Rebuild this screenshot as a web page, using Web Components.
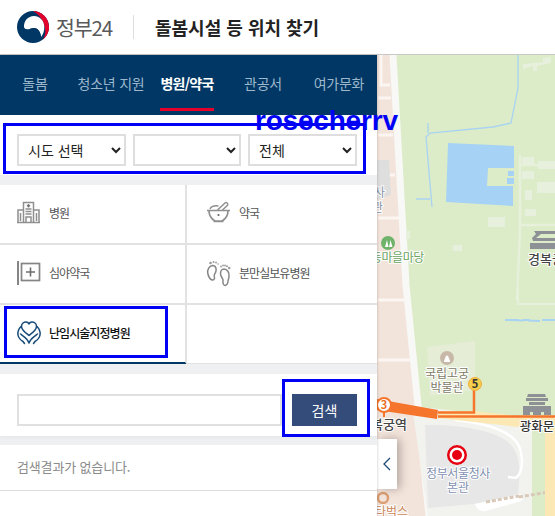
<!DOCTYPE html>
<html lang="ko"><head><meta charset="utf-8"><title>돌봄시설 등 위치 찾기</title>
<style>
html,body{margin:0;height:516px;overflow:hidden;background:#fff}
body{font-family:"Noto Sans CJK KR","Noto Sans",sans-serif;width:555px;position:relative}
</style></head><body>
<care-page>
  <gov-header slot="header" title-text="돌봄시설 등 위치 찾기"></gov-header>
  <care-panel slot="panel">
    <nav-bar>
      <nav-tab>돌봄</nav-tab><nav-tab>청소년 지원</nav-tab><nav-tab active>병원/약국</nav-tab><nav-tab>관공서</nav-tab><nav-tab>여가문화</nav-tab>
    </nav-bar>
    <filter-bar></filter-bar>
    <facility-grid>
      <facility-cell icon="hospital">병원</facility-cell>
      <facility-cell icon="mortar">약국</facility-cell>
      <facility-cell icon="night">심야약국</facility-cell>
      <facility-cell icon="feet">분만실보유병원</facility-cell>
      <facility-cell icon="heart" active>난임시술지정병원</facility-cell>
      <facility-cell></facility-cell>
    </facility-grid>
    <search-box></search-box>
    <result-list>검색결과가 없습니다.</result-list>
  </care-panel>
  <map-view slot="map"></map-view>
</care-page>
<mark-box style="left:3px;top:123px;width:357px;height:45px"></mark-box>
<mark-box style="left:4px;top:306px;width:158px;height:46px"></mark-box>
<mark-box style="left:282px;top:379px;width:82px;height:52px"></mark-box>
<mark-label>rosecherrv</mark-label>
<script>
function def(name, html, init){
  customElements.define(name, class extends HTMLElement{
    constructor(){super();this.attachShadow({mode:'open'}).innerHTML=html;}
    connectedCallback(){if(init)init(this);}
  });
}
def('care-page',`<style>:host{display:flex;flex-direction:column;width:555px;height:516px}
.m{display:flex;height:461px;flex:none;position:relative}</style>
<slot name="header"></slot><div class="m"><slot name="panel"></slot><slot name="map"></slot></div>`);

def('gov-header',`<style>:host{display:flex;align-items:center;height:54px;border-bottom:1px solid #c9c9c9;background:#fff;flex:none;box-sizing:content-box;padding-left:17px}
svg{flex:none;display:block}
.b{font:400 20.5px/1 "Noto Sans CJK KR",sans-serif;color:#58595b;letter-spacing:-1.1px;margin-left:7px;width:61px;white-space:nowrap}
.d{width:1px;height:24px;background:#ddd;margin:0 21px 0 16px}
.t{font:700 18px/1 "Noto Sans CJK KR",sans-serif;color:#222;letter-spacing:0;white-space:nowrap}</style>
<svg width="32" height="32" viewBox="0 0 32 32">
<circle cx="16" cy="16" r="16" fill="#003764"/>
<path d="M16 0c8.800 0 16 7.200 16 16 0 5-2.300 9.500-6 12.500 1.800-3 2.500-6 2.300-9C27.800 11 22.500 3.500 16 0z" fill="#e4002b"/>
<path d="M7 16.500C6.500 10 11 5 17 5c5.500 0 10 4.500 10.300 10.500.2 4-1 7.500-3.300 10.500-.3-5-3-9-7-9-2.500 0-3.500 1-5.500 1.400-2 .4-4-.4-4.500-1.900z" fill="#fff"/>
<path d="M7 16.500c.5 1.500 2.500 2.300 4.500 1.900 2-.4 3-1.400 5.500-1.400 4 0 6.700 4 7 9-2.300 2-5 3.200-8 3C10 29.500 6 23.500 7 16.500z" fill="#003764"/>
</svg><span class="b">정부24</span><span class="d"></span><span class="t"></span>`,
el=>{el.shadowRoot.querySelector('.t').textContent=el.getAttribute('title-text')});

def('care-panel',`<style>:host{display:flex;flex-direction:column;width:377px;flex:none;background:#eef0f2;position:relative;z-index:2;box-shadow:1px 0 2px rgba(0,0,0,.12)}</style><slot></slot>`);

def('nav-bar',`<style>:host{display:block;height:60px;background:#003764;flex:none;overflow:hidden}
div{display:grid;grid-template-columns:repeat(5,76px);margin-left:-3px;height:60px}</style><div><slot></slot></div>`);
def('nav-tab',`<style>:host{display:flex;flex-direction:column;align-items:center;height:60px;font:400 14px/1 "Noto Sans CJK KR",sans-serif;color:#9db8cd;letter-spacing:-.25px;white-space:nowrap}
span{display:block;margin-top:21px;height:35px}
:host([active]) span{color:#fff;font-weight:700;letter-spacing:-.75px;border-bottom:3px solid #e4002b;padding:0 .5px;height:32px}
</style><span><slot></slot></span>`);

def('filter-bar',`<style>:host{display:flex;gap:7px;height:60px;padding:19px 20px 9px 17px;box-sizing:border-box;background:#fff;flex:none;margin-bottom:10px}
select{height:32px;box-sizing:border-box;border:2px solid #dedede;background:#fff;font:400 14px "Noto Sans CJK KR",sans-serif;color:#222;padding:0 6px 0 5px;border-radius:0;outline:0;flex:none}
</style>
<select style="width:109px"><option>시도 선택</option></select>
<select style="width:108px"><option></option></select>
<select style="width:109px"><option>전체</option></select>`);

def('facility-grid',`<style>:host{display:grid;grid-template-columns:187px 190px;grid-auto-rows:60px;background:#fff;flex:none;margin-bottom:10px;height:179px;overflow:hidden}</style><slot></slot>`);
const ICONS={
hospital:`<g fill="none" stroke="#8f8f8f" stroke-width="1.500"><path d="M6.500 21V1.500h10V21M9 21v-5h5v5M1 21V9h5.500M22 21V9h-5.500M0 21.500h23"/><path d="M8.500 8h6M8.500 10.500h6M8.500 13h6M3.500 12v8M19.500 12v8"/><path d="M11.500 3v3.400M9.800 4.700h3.400" stroke="#777"/></g>`,
mortar:`<g fill="none" stroke="#8f8f8f" stroke-width="1.700"><path d="M0 9.500h23M2 9.500c0 5 2.500 8.500 6 10.500h7c3.500-2 6-5.500 6-10.500M6.500 20.500h10"/><path d="M10.500 9l7.500-7c1.300-1.200 3.500.6 2.500 2.200L15.500 9" stroke-width="1.500"/><path d="M3 8c1-2.500 4-3.500 8.500-3" stroke-width="1.500"/><circle cx="11.500" cy="14" r="1.100" fill="#666" stroke="none"/></g>`,
night:`<g fill="none" stroke="#858585"><path d="M1 0v24" stroke-width="2"/><rect x="4.500" y="2.500" width="18" height="17" stroke-width="1.700"/><path d="M13.500 6.500v9M9 11h9" stroke-width="1.600" stroke="#6e6e6e"/></g>`,
feet:`<g fill="none" stroke="#868686" stroke-width="1.500"><path d="M5.500 4.500C2 5 0 9 .8 12.500c.6 2.800 1.800 5 3.400 6 2.300 1.300 4-.6 3.100-2.800-.7-1.700.4-2.700 1.300-4.400 1.200-2.400.6-7.300-3.600-6.800z"/><path d="M17 8c3.300.2 5.500 3.300 5 7.500-.3 2.200-.8 3.200-1.100 5.300-.4 3.200-2.400 4.200-3.900 3.200-1.700-1.100-.8-3.200-1.100-5.300-.3-2-2.400-3.100-2.400-6.200C13.500 10 15 8 17 8z"/></g><g fill="#999"><circle cx="3.500" cy="2" r="1.300"/><circle cx="6.500" cy="1" r="1"/><circle cx="9" cy="1.500" r=".9"/><circle cx="11" cy="3" r=".8"/><circle cx="14" cy="5.500" r=".9"/><circle cx="16" cy="4.500" r=".9"/><circle cx="18" cy="4.500" r=".9"/><circle cx="20" cy="5.200" r="1"/><circle cx="22.200" cy="7" r="1.200"/></g>`,
heart:`<g fill="none" stroke="#164a78" stroke-width="1.500" stroke-linejoin="round" stroke-linecap="round"><path d="M12 14.500C8 11.500 4.500 9 4.500 5.500 4.500 2.500 7 1 9 1c1.500 0 2.500.7 3 2 .5-1.300 1.500-2 3-2 2 0 4.500 1.500 4.500 4.500 0 3.500-3.500 6-7.500 9z"/><path d="M4 5.500C1.500 8 .5 11 1 14c.5 3 2.500 5 5 6.500l1.500 2M20 5.500c2.500 2.500 3.500 5.500 3 8.500-.5 3-2.500 5-5 6.500l-1.500 2"/><path d="M3.500 13c2 1.500 5 3.500 6.500 5.500.8 1 1.500 2 2 3.500.5-1.500 1.200-2.500 2-3.500 1.500-2 4.500-4 6.500-5.500"/></g>`};
def('facility-cell',`<style>:host{display:flex;align-items:center;box-sizing:border-box;height:60px;padding:0 0 2px 17px;border-right:2px solid #e2e2e2;border-bottom:2px solid #e2e2e2;font:400 12px/1 "Noto Sans CJK KR",sans-serif;color:#555;letter-spacing:-.95px;white-space:nowrap}
:host(:nth-child(even)){border-right:0;padding-left:20px}
:host([active]){border-bottom:3px solid #003764;color:#111;font-weight:500;padding-bottom:1px}
svg{width:23px;height:24px;margin-right:9px;flex:none;display:block;overflow:visible}
:host(:not([icon])) svg{display:none}</style><svg viewBox="0 0 23 24"></svg><span><slot></slot></span>`,
el=>{el.shadowRoot.querySelector('svg').innerHTML=ICONS[el.getAttribute('icon')]||''});

def('search-box',`<style>:host{display:flex;gap:10px;height:62px;padding:20px 20px 10px 17px;box-sizing:border-box;background:#fff;flex:none;margin-bottom:9px;box-shadow:0 2px 4px rgba(0,0,0,.04)}
input{width:265px;height:32px;box-sizing:border-box;border:2px solid #e0e0e0;background:#fff;outline:0;margin:0;padding:0 6px;flex:none}
button{width:65px;height:32px;border:0;background:#334c7a;color:#fff;font:400 14px "Noto Sans CJK KR",sans-serif;margin:0;padding:0;flex:none}</style>
<input type="text" aria-label="검색"><button type="button">검색</button>`);

def('result-list',`<style>:host{display:block;background:#fff;flex:1;font:400 13px/1 "Noto Sans CJK KR",sans-serif;color:#8a8a8a;letter-spacing:-.15px}
div{height:46px;box-sizing:border-box;display:flex;align-items:center;padding:0 0 2px 17px;border-bottom:1px solid #ddd}</style><div><slot></slot></div>`);

def('map-view',`<style>:host{display:block;flex:1;position:relative;overflow:hidden;background:#dcecc8}
svg{display:block;width:178px;height:461px}
text{font-family:"Noto Sans CJK KR",sans-serif;paint-order:stroke;stroke:#fff;stroke-width:2px;stroke-linejoin:round}
.tab{position:absolute;left:0;top:384px;width:20px;height:50px;background:#fff;display:flex;align-items:center;justify-content:center;box-shadow:3px 0 10px rgba(0,0,0,.28)}
</style>
<svg viewBox="377 55 178 461">
<polygon points="377,55 393,55 406,285 429,516 377,516" fill="#f3e4db"/>
<path d="M381 55v30h9M378 98h13M378 135h15M378 175h17M378 218h21M378 300h26M378 360h32" stroke="#fbf6f2" stroke-width="3" fill="none"/>
<polygon points="377,160 389,160 391,195 377,200" fill="#dedede"/>
<polyline points="393,55 406,285 429,516" fill="none" stroke="#f8f8f6" stroke-width="7"/>
<path d="M518 55v33l-7 35-18 4-63 6-4 4 6 70M428 123v10M416 199h14" fill="none" stroke="#a9d3f2" stroke-width="1.300"/>
<polygon points="448,143 514,146 514,168 488,168 487,186 513,186 513,206 446,202" fill="#a5d2f5"/>
<rect x="508" y="171" width="6" height="5" fill="#a5d2f5"/><rect x="507" y="178" width="7" height="6" fill="#a5d2f5"/>
<path d="M520 155v75l-3 70M519 225h36M520 165h35" fill="none" stroke="#e6f0da" stroke-width="2.500"/>
<g fill="#e7f0dc"><rect x="522" y="157" width="12" height="7"/><rect x="522" y="171" width="12" height="8"/><rect x="537" y="182" width="18" height="11"/><rect x="525" y="190" width="7" height="10"/><rect x="525" y="209" width="11" height="7"/><rect x="538" y="161" width="17" height="8"/><rect x="488" y="217" width="17" height="10"/><rect x="406" y="231" width="4" height="8"/><rect x="453" y="245" width="9" height="6"/><path d="M523 64l20-2v-4l8-1v6l-14 3v5h-4v-5l-10 3z"/></g>
<g fill="#8d9094"><path d="M534 231h21v3h-14l-5 4h19v3h-22l-1-3 4-4z"/><rect x="530" y="243" width="25" height="6"/></g>
<text x="528" y="264" font-size="13" font-weight="500" fill="#444">경복궁</text>
<circle cx="388" cy="243" r="7" fill="#6fb36b"/><path d="M385 247l2-7 1.500 7zM389 247l1.500-7 2 7z" fill="#fff"/>
<text x="424" y="262" text-anchor="end" font-size="12" fill="#6ba45f" letter-spacing="-.4">동마을마당</text>
<text x="374" y="197" font-size="12" fill="#8b93a7">사</text>
<text x="372" y="212" font-size="12" fill="#8b93a7">관</text>
<path d="M518 286v18h38" fill="none" stroke="#e6f0da" stroke-width="2"/>
<path d="M505 320h25M542 320h13M510 320l30 1" stroke="#a9d3f2" stroke-width="2" stroke-dasharray="14 4" fill="none"/>
<polygon points="427,347 475,341 475,390 430,396" fill="#e5edd6"/>
<circle cx="447" cy="358" r="7" fill="#c7b8a8"/><path d="M444 362c0-3 1.500-3.500 1.500-5a1.500 1.500 0 013 0c0 1.500 1.500 2 1.500 5z" fill="#fff"/>
<text x="447" y="378" text-anchor="middle" font-size="12" fill="#7d7a66">국립고궁</text>
<text x="447" y="392" text-anchor="middle" font-size="12" fill="#7d7a66">박물관</text>
<polygon points="412,406 518,418 555,418 555,516 428,516" fill="#f2f2ef"/>
<polygon points="532,430 545,430 545,516 532,516" fill="#dcecc8"/>
<path d="M425 425h14c30 2 52 5 68 16 8 7 14 16 12 41l-1 14-45 8-45 4z" fill="#e7e7e7"/>
<path d="M455 420c30 3 50 10 60 20 8 9 10 30 1 38l-8-1" fill="none" stroke="#fff" stroke-width="2.500"/>
<path d="M475 504l45-10c3 0 4 6 1 7l-35 10c-6 1-10-2-11-7z" fill="#fff"/>
<path d="M486 502l33-6M519 497l36-6" stroke="#d8c9b9" stroke-width="3" stroke-dasharray="4 2"/>
<polygon points="438,411 475,411 518,416 555,416 555,427 518,427 438,418" fill="#fbe8b4"/>
<rect x="545" y="425" width="10" height="91" fill="#fbe8b4"/>
<polygon points="377,399 438,410 437,419 377,410" fill="#f5752d"/>
<path d="M438 412.500h36V389M438 416.500h117" fill="none" stroke="#f5752d" stroke-width="2.500"/>
<circle cx="475" cy="384" r="6.500" fill="#f6cf4c" stroke="#f5a93a"/>
<text x="475" y="388" text-anchor="middle" font-size="11" font-weight="700" fill="#333" style="stroke:none">5</text>
<path d="M384 412v5" stroke="#f5752d" stroke-width="2"/>
<circle cx="384" cy="405" r="7" fill="#fff" stroke="#f5752d" stroke-width="2"/>
<text x="384" y="409" text-anchor="middle" font-size="11" font-weight="700" fill="#ea6c22" style="stroke:none">3</text>
<text x="407" y="429" text-anchor="end" font-size="13" font-weight="500" fill="#444">경복궁역</text>
<g fill="#8d9094"><path d="M528 394h17l1 3h-19zM526 398h22v3h-22zM529 402h16v3h-16z"/><path d="M523 406h28v9h-7v-3h-3v3h-8v-3h-3v3h-7z"/></g>
<text x="537" y="431" text-anchor="middle" font-size="12.500" font-weight="500" fill="#333">광화문</text>
<circle cx="457" cy="455" r="10" fill="#e60012"/><circle cx="457" cy="455" r="7.500" fill="#fff"/><circle cx="457" cy="455" r="5" fill="#e60012"/>
<text x="458" y="478" text-anchor="middle" font-size="12" letter-spacing="-.4" fill="#7f8fb0">정부서울청사</text>
<text x="458" y="492" text-anchor="middle" font-size="12" fill="#7f8fb0">본관</text>
<circle cx="383" cy="498" r="5" fill="none" stroke="#dc9f74" stroke-width="2.500"/>
<text x="375" y="516" font-size="12" fill="#c9875a">타벅스</text>
</svg>
<div class="tab"><svg viewBox="0 0 10 14" style="width:10px;height:14px"><path d="M8 1L2 7l6 6" fill="none" stroke="#1d4a75" stroke-width="1.300"/></svg></div>`);

def('mark-box',`<style>:host{display:block;position:absolute;border:3px solid #0000f5;z-index:5;pointer-events:none}</style>`);
def('mark-label',`<style>:host{display:block;position:absolute;left:255px;top:106px;z-index:6;font:700 28px/30px "Liberation Sans",sans-serif;color:#0000f5;letter-spacing:-.2px;white-space:nowrap}</style><slot></slot>`);
</script>
</body></html>
